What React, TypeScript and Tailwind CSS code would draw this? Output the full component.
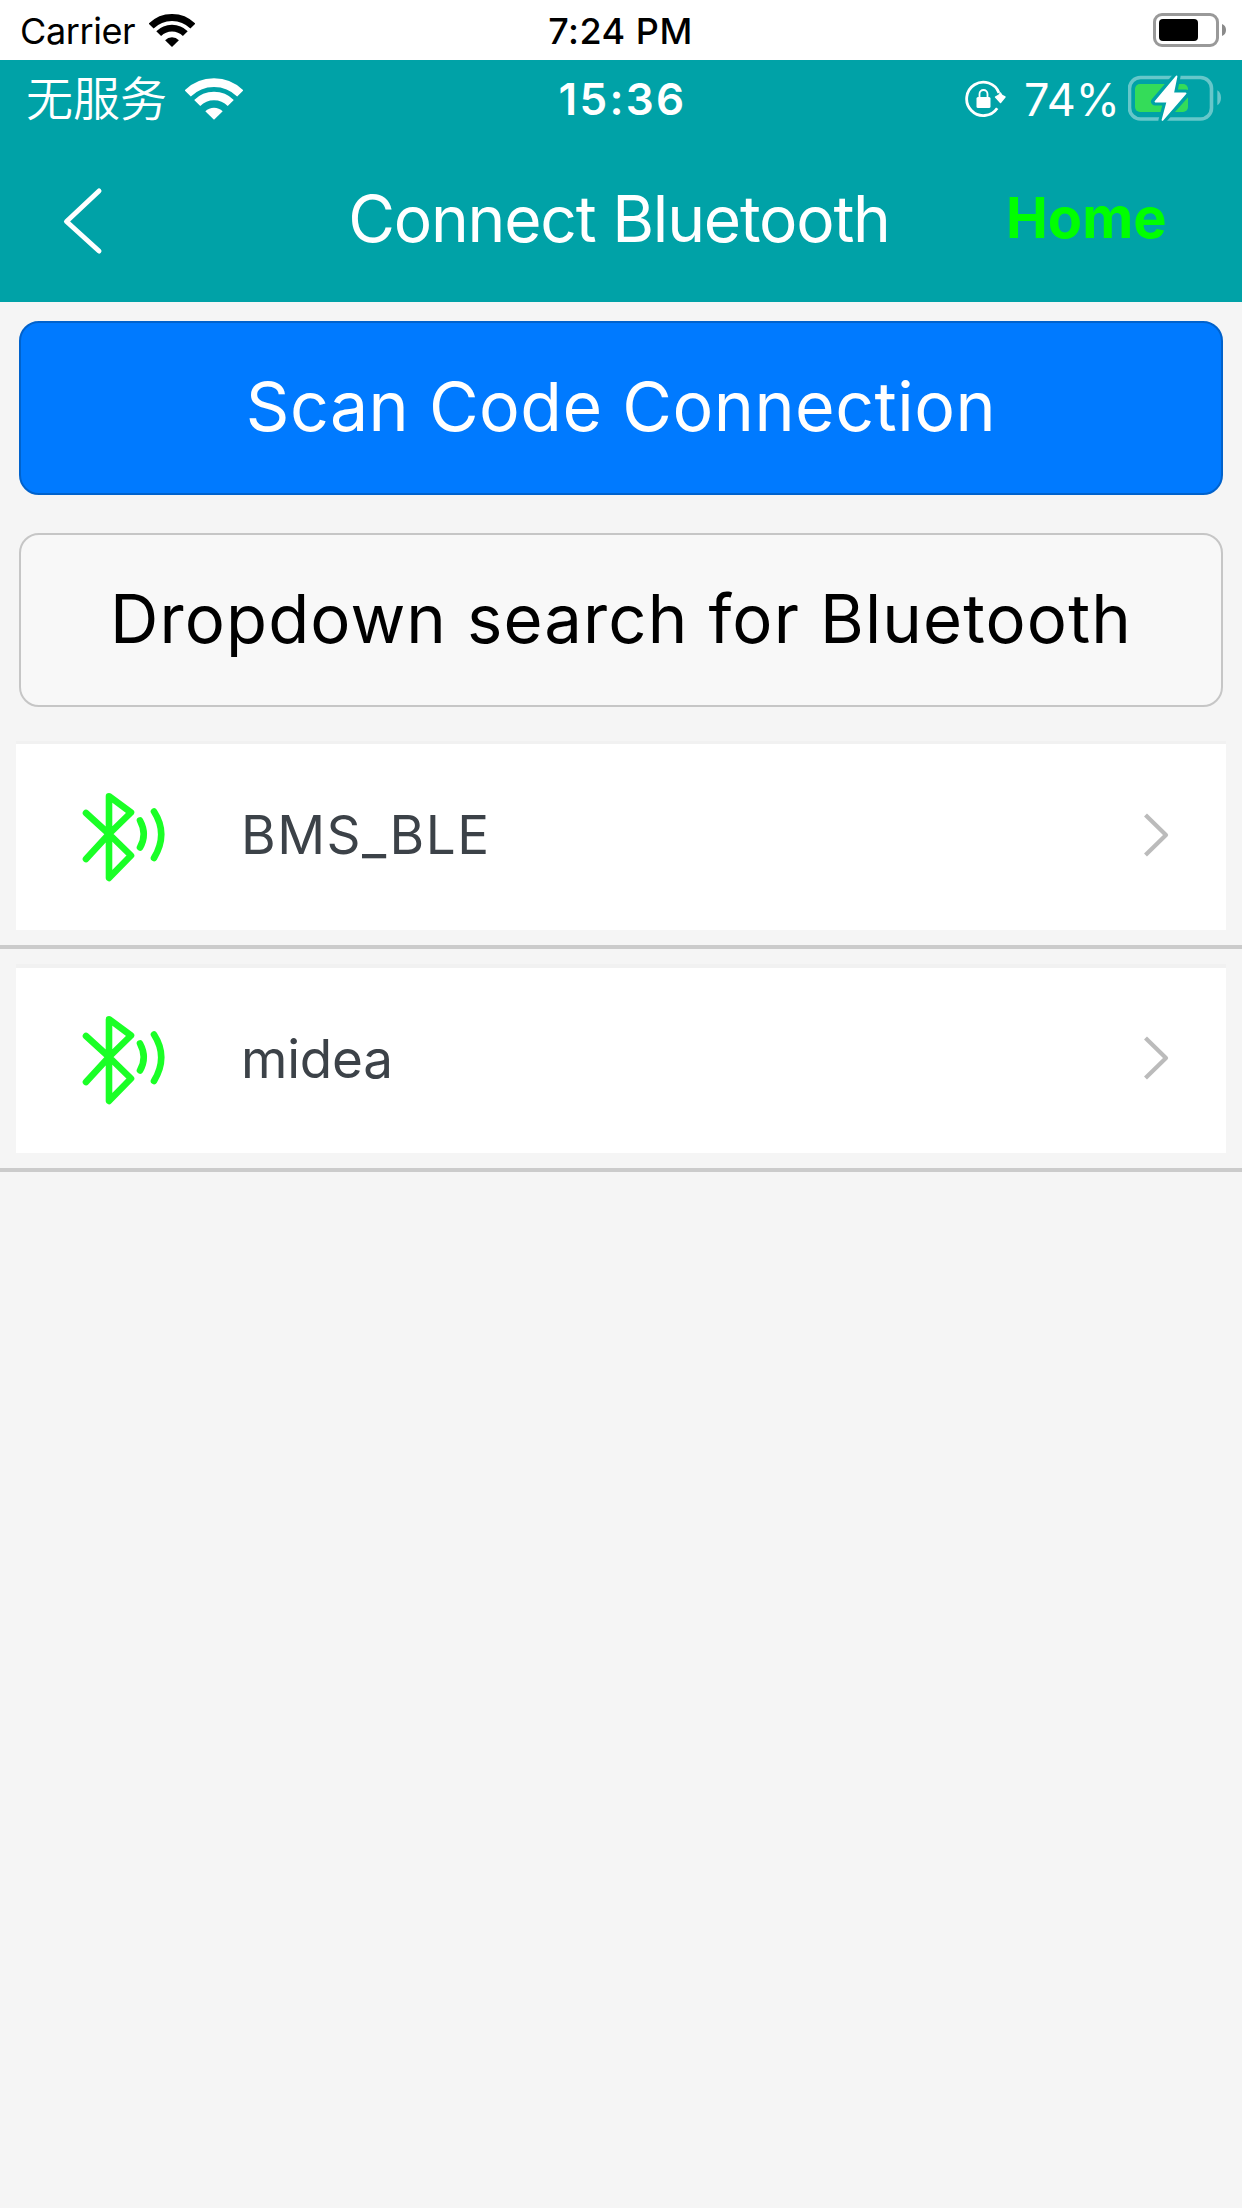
type WifiProps = { className: string };

function Wifi({ className }: WifiProps) {
  return (
    <svg viewBox="0 0 46 33" className={className} fill="none" stroke="currentColor">
      <path d="M2.14 12.14A29.5 29.5 0 0 1 43.86 12.14" strokeWidth="7" />
      <path d="M9.7 19.7A18.8 18.8 0 0 1 36.3 19.7" strokeWidth="6.8" />
      <path d="M23 33L16.1 26.2A9.8 9.8 0 0 1 29.9 26.2Z" fill="currentColor" stroke="none" />
    </svg>
  );
}

function Battery() {
  return (
    <svg viewBox="0 0 74 34" className="h-[34px] w-[74px]">
      <rect x="1.5" y="1.5" width="63" height="31" rx="7.5" fill="none" stroke="#999" strokeWidth="3" />
      <rect x="6" y="6" width="39" height="22" rx="4" fill="#000" />
      <path d="M69 11Q73 12.5 73 17T69 23Z" fill="#8a8a8a" />
    </svg>
  );
}

function ChargingBattery() {
  return (
    <svg viewBox="0 0 94 46" className="mb-[3px] h-[46px] w-[94px]">
      <rect x="1.5" y="2.5" width="82" height="41.5" rx="11" fill="none" stroke="#66c7ca" strokeWidth="3.6" />
      <path d="M89.3 15.3Q93 17.5 93 22.8T89.3 30.3Z" fill="#66c7ca" />
      <rect x="7" y="9" width="53" height="28" rx="5" fill="#34dc59" />
      <path
        d="M48.500 1.500L27 26.500H39.500L34.500 45L58 18.500H45Z"
        fill="#00a2a7"
        stroke="#00a2a7"
        strokeWidth="8"
        strokeLinejoin="round"
      />
      <path d="M48.500 1.500L27.500 26.500H39.500L34.500 45L57.500 18.500H45Z" fill="#fff" stroke="#fff" strokeWidth="1.8" strokeLinejoin="round" />
    </svg>
  );
}

function RotationLock() {
  return (
    <svg viewBox="0 0 42 38" className="h-[38px] w-[42px]" fill="none" stroke="#fff">
      <path d="M35 13A16.7 16.7 0 1 0 33.2 28.2" strokeWidth="2.8" />
      <path d="M31.5 17L35 15L36.500 13L38 15.500L41 17L36.500 22.500Z" fill="#fff" strokeWidth="1.4" strokeLinejoin="round" />
      <rect x="12.5" y="17" width="14" height="11" rx="1.5" fill="#fff" stroke="none" />
      <path d="M15.500 17.500V14a4 4 0 0 1 8 0V17.500" strokeWidth="1.8" />
    </svg>
  );
}

function BluetoothSignal() {
  return (
    <svg
      viewBox="0 0 88 92"
      className="h-[92px] w-[88px]"
      fill="none"
      stroke="#1aff26"
      strokeWidth="6.6"
      strokeLinecap="round"
      strokeLinejoin="round"
    >
      <path d="M7 22L30 43L52 64.500L30 87V5.200L52 21.500L30 43L7 68" />
      <path d="M61 29.500Q68.500 43.500 61 56.500" />
      <path d="M75 20.500Q89.500 43 75 67" />
    </svg>
  );
}

function DeviceRow({ name, textClass, boxClass }: { name: string; textClass: string; boxClass: string }) {
  return (
    <li className="border-b-4 border-[#cbcbcb] px-4 pb-[15px]">
      <div className={`flex h-[189px] items-center border-t-[#f1f1f1] bg-white pr-[57px] pl-[63px] ${boxClass}`}>
        <BluetoothSignal />
        <span className={`ml-[74px] flex-1 text-[53px] leading-none text-[#3c4248] ${textClass}`}>{name}</span>
        <svg viewBox="0 0 26 44" className="mb-1 h-11 w-[26px]" fill="none" stroke="#bbb" strokeWidth="4.2">
          <path d="M2.5 2L23 22L2.5 42" strokeLinejoin="round" />
        </svg>
      </div>
    </li>
  );
}

export default function App() {
  return (
    <div className="flex h-[2208px] w-[1242px] flex-col overflow-hidden bg-[#f5f5f5] font-['Inter','Noto_Sans_CJK_SC',sans-serif]">
      <div className="grid h-[60px] grid-cols-[1fr_auto_1fr] items-center bg-white pr-[15px] pl-5 text-[36px] leading-none text-black">
        <div className="flex items-center">
          <span className="mt-px w-[129px] tracking-[-0.4px]">Carrier</span>
          <Wifi className="h-[33px] w-[46px]" />
        </div>
        <span className="mt-px mr-[6px] text-center font-medium tracking-[0.5px]">7:24 PM</span>
        <div className="flex justify-end">
          <Battery />
        </div>
      </div>

      <header className="flex h-[242px] flex-col bg-[#00a2a7] text-white">
        <div className="grid h-[78px] grid-cols-[1fr_auto_1fr] items-center pr-5 pl-[26px] text-[44px] leading-none">
          <div className="flex items-center">
            <span className="mt-[-7px] w-[159px] font-['Noto_Sans_CJK_SC',sans-serif] text-[47px] font-[350]">无服务</span>
            <Wifi className="h-[42px] w-[58px]" />
          </div>
          <span className="mr-[3px] text-center font-semibold tracking-[2.3px]">15:36</span>
          <div className="flex items-center justify-end">
            <RotationLock />
            <span className="mr-[8px] ml-[18px] text-[45px]">74%</span>
            <ChargingBattery />
          </div>
        </div>
        <div className="grid flex-1 grid-cols-[340px_1fr_340px] items-start pt-[49px]">
          <svg viewBox="0 0 44 70" className="ml-[60px] h-[70px] w-11" fill="none" stroke="#fff" strokeWidth="5" strokeLinecap="round" strokeLinejoin="round">
            <path d="M39 4L6.500 34.500L39 64" />
          </svg>
          <h1 className="pr-[4px] text-center text-[64px] leading-16 font-normal tracking-[-1.2px] whitespace-nowrap">Connect Bluetooth</h1>
          <span className="mt-[3px] ml-[104px] text-[56px] leading-14 font-bold text-[#00ff00]">Home</span>
        </div>
      </header>

      <main className="flex flex-col">
        <div className="flex flex-col gap-[38px] px-[19px] pt-[19px]">
          <button className="flex h-[174px] items-center justify-center rounded-[20px] border-2 border-[#0062cc] bg-[#007aff] pb-[4px] text-[68px] leading-none font-normal tracking-[0.5px] text-white">
            Scan Code Connection
          </button>
          <button className="flex h-[174px] items-center justify-center rounded-[20px] border-2 border-[#c6c6c6] bg-[#f8f8f8] pb-1 text-[67px] leading-none font-normal tracking-[1.12px] text-black">
            Dropdown search for Bluetooth
          </button>
        </div>
        <ul className="flex flex-col gap-[15px] pt-[34px]">
          <DeviceRow name="BMS_BLE" textClass="mb-1 tracking-[1.5px]" boxClass="border-t-[3px]" />
          <DeviceRow name="midea" textClass="mb-[2px] tracking-[-0.2px]" boxClass="border-t-4 pb-px" />
        </ul>
      </main>
    </div>
  );
}
